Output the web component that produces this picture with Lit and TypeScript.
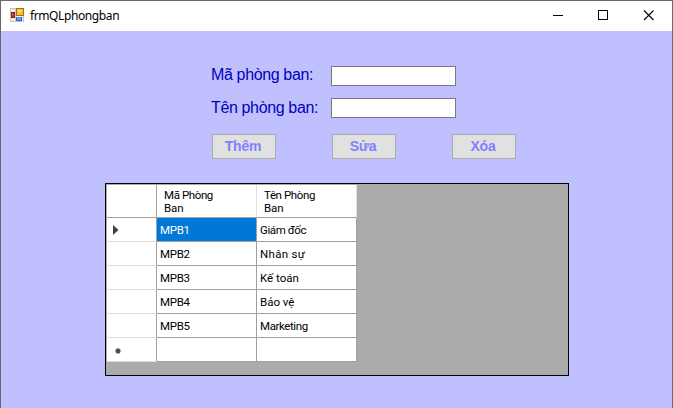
import { LitElement, html, css, svg } from "lit";
import { customElement, state } from "lit/decorators.js";

interface Department {
  id: string;
  name: string;
  fit: string;
}

@customElement("app-root")
export class AppRoot extends LitElement {
  static styles = css`
    :host {
      display: block;
      width: 673px;
      height: 408px;
      overflow: hidden;
    }
    * { box-sizing: border-box; }
    .window {
      height: 408px;
      border: 1px solid #696969;
      border-bottom: 0;
      background: #c0c0ff;
      display: flex;
      flex-direction: column;
    }
    .titlebar {
      height: 30px;
      flex: none;
      background: #fff;
      display: flex;
      align-items: center;
      padding-left: 9px;
      font: 12px/16px "Noto Sans", "Open Sans", sans-serif;
      color: #000;
    }
    .title { margin-left: 5px; letter-spacing: -0.4px; flex: 1; }
    .caption { display: block; width: 45px; height: 30px; }
    .app-icon { display: block; margin-bottom: 2px; }
    .client { flex: 1; padding: 35px 0 0 104px; }
    .field {
      display: flex;
      height: 20px;
      margin: 0 0 12px 106px;
    }
    .label {
      width: 120px;
      font: 16px/18px "Liberation Sans", Arial, sans-serif;
      letter-spacing: -0.36px;
      color: #0000c0;
      white-space: nowrap;
    }
    .label.low { padding-top: 1px; }
    .input {
      width: 125px;
      height: 20px;
      padding: 0 3px;
      border: 1px solid #7a7a7a;
      border-radius: 0;
      background: #fff;
      outline: none;
    }
    .actions {
      display: flex;
      gap: 56px;
      margin: 16px 0 0 107px;
    }
    .action {
      width: 64px;
      height: 25px;
      padding: 0 2px 2px 0;
      border: 1px solid #adadad;
      border-radius: 0;
      background: #e1e1e1;
      color: #8080ff;
      font: bold 14px/20px "Liberation Sans", Arial, sans-serif;
      letter-spacing: -0.2px;
    }
    .grid {
      width: 464px;
      height: 193px;
      margin-top: 24px;
      border: 1px solid #000;
      background: #ababab;
      padding: 1px 0 0 1px;
      font: 11.5px/13px "Roboto", sans-serif;
      color: #000;
    }
    .row {
      display: grid;
      grid-template-columns: 50px 100px 100px;
      grid-template-rows: 24px;
      width: 250px;
    }
    .row.head { grid-template-rows: 33px; }
    .cell {
      background: #fff;
      border-right: 1px solid #a0a0a0;
      border-bottom: 1px solid #a0a0a0;
      padding-left: 3px;
      height: 24px;
      line-height: 24px;
      white-space: nowrap;
    }
    .row-head {
      background: #fff;
      border-right: 1px solid #a0a0a0;
      border-bottom: 1px solid #e0e0e0;
    }
    .head .row-head { border-bottom-color: #a0a0a0; }
    .col-head {
      background: #fff;
      border-right: 1px solid #e0e0e0;
      border-bottom: 1px solid #a0a0a0;
      padding: 4px 0 0 7px;
      letter-spacing: -0.4px;
    }
    .line { display: block; white-space: nowrap; }
    .short { letter-spacing: -0.1px; }
    .selected { background: #0078d7; color: #fff; }
    .mark { display: block; }
    .wide { letter-spacing: 0.3px; }
    .tight { letter-spacing: -0.4px; }
    .id { letter-spacing: -0.3px; }
  `;

  @state() private rows: Department[] = [
    { id: "MPB1", name: "Giám đốc", fit: "tight" },
    { id: "MPB2", name: "Nhân sự", fit: "wide" },
    { id: "MPB3", name: "Kế toán", fit: "" },
    { id: "MPB4", name: "Bảo vệ", fit: "" },
    { id: "MPB5", name: "Marketing", fit: "tight" },
  ];

  @state() private current = 0;

  private appIcon() {
    return html`<svg class="app-icon" width="15" height="14" viewBox="0 0 15 14" shape-rendering="crispEdges">
      <rect x="0.5" y="0.5" width="13" height="13" fill="#eeeeea" stroke="#c4c4c0" />
      <path d="M5.500 1V14M1 9.500H14" stroke="#c9c9c5" />
      <rect x="6" y="0" width="8" height="8" fill="#9a7414" />
      <rect x="7" y="1" width="6" height="6" fill="#f7bd32" />
      <rect x="8" y="2" width="3" height="2" fill="#ffe58c" />
      <rect x="1" y="4" width="4" height="6" fill="#851b12" />
      <rect x="2" y="5" width="2" height="4" fill="#ce3b2b" />
      <rect x="2" y="6" width="1" height="1" fill="#ef8a74" />
      <rect x="6" y="9" width="6" height="4" fill="#2f68c4" />
      <rect x="7" y="9" width="4" height="3" fill="#609af0" />
    </svg>`;
  }

  private caption(glyph: unknown) {
    return html`<svg class="caption" viewBox="0 0 45 30" fill="none" stroke="#000">${glyph}</svg>`;
  }

  private marker(kind: string) {
    return html`<svg class="mark" width="49" height="23" viewBox="0 0 49 23">
      ${kind === "current"
        ? svg`<path d="M6 7L11.500 12L6 17Z" fill="#404044" />`
        : svg`<g stroke="#555" stroke-width="1.100"><path d="M11 10V16M8 13H14M9 11L13 15M13 11L9 15" /><circle cx="11" cy="13" r="1.500" fill="#444" /></g>`}
    </svg>`;
  }

  render() {
    return html`
      <div class="window">
        <header class="titlebar">
          ${this.appIcon()}
          <span class="title">frmQLphongban</span>
          ${this.caption(svg`<path d="M16 14.500H26" />`)}
          ${this.caption(svg`<rect x="16.500" y="9.500" width="9" height="9" />`)}
          ${this.caption(svg`<path d="M17 9.500L26.500 19M26.500 9.500L17 19" stroke-width="1.100" />`)}
        </header>
        <main class="client">
          <label class="field"><span class="label">Mã phòng ban:</span><input class="input" /></label>
          <label class="field"><span class="label low">Tên phòng ban:</span><input class="input" /></label>
          <div class="actions">
            <button class="action">Thêm</button>
            <button class="action">Sửa</button>
            <button class="action">Xóa</button>
          </div>
          <section class="grid">
            <div class="row head">
              <div class="row-head"></div>
              <div class="col-head"><span class="line">Mã Phòng</span><span class="line short">Ban</span></div>
              <div class="col-head"><span class="line">Tên Phòng</span><span class="line short">Ban</span></div>
            </div>
            ${this.rows.map(
              (r, i) => html`<div class="row">
                <div class="row-head">${i === this.current ? this.marker("current") : ""}</div>
                <div class="cell id ${i === this.current ? "selected" : ""}">${r.id}</div>
                <div class="cell ${r.fit}">${r.name}</div>
              </div>`
            )}
            <div class="row">
              <div class="row-head">${this.marker("new")}</div>
              <div class="cell"></div>
              <div class="cell"></div>
            </div>
          </section>
        </main>
      </div>
    `;
  }
}
